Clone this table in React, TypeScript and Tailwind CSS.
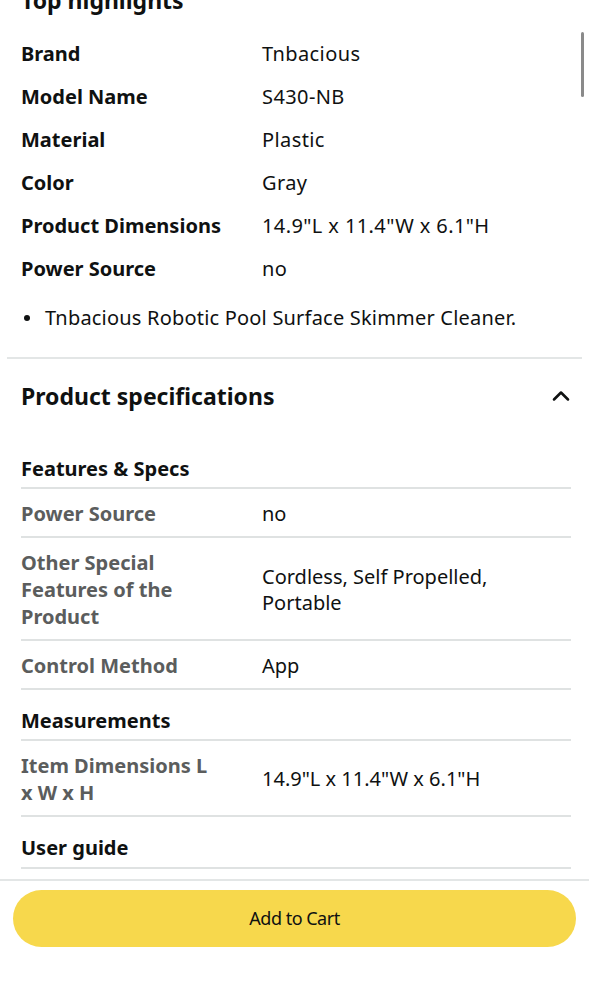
import { ChevronUp } from "lucide-react";

const highlights = [
  ["Brand", "Tnbacious"],
  ["Model Name", "S430-NB"],
  ["Material", "Plastic"],
  ["Color", "Gray"],
  ["Product Dimensions", '14.9"L x 11.4"W x 6.1"H'],
  ["Power Source", "no"],
];

function SpecRow({ label, value }: { label: string; value: string }) {
  return (
    <div className="flex items-center border-b-2 border-[#dfe2e2] pb-[9px] pt-[11px]">
      <div className="w-[241px] shrink-0 pr-[46px] font-bold leading-[27px] text-[#5b5d5d]">{label}</div>
      <div className="leading-[26px] text-[#0f1111]">{value}</div>
    </div>
  );
}

function GroupTitle({ title, last }: { title: string; last?: boolean }) {
  return (
    <div
      className={
        last
          ? "border-b-2 border-[#dfe2e2] pb-[6px] pt-[18px] font-bold leading-[26px] text-[#0f1111]"
          : "border-b-2 border-[#dfe2e2] pb-[5px] pt-[18px] font-bold leading-[26px] text-[#0f1111]"
      }
    >
      {title}
    </div>
  );
}

export default function App() {
  return (
    <div
      className="relative h-[1000px] overflow-hidden bg-white text-[20px] text-[#0f1111]"
      style={{ fontFamily: '"Noto Sans", "Open Sans", sans-serif' }}
    >
      {/* scrollbar */}
      <div className="absolute right-[5px] top-[32px] h-[65px] w-[3px] rounded bg-[#8a8a8a]" />

      <div className="px-[21px]">
        <h2 className="-mt-[14px] text-[23px] font-bold leading-[28px]">Top highlights</h2>
        <div className="mt-[18px]">
          {highlights.map(([label, value]) => (
            <div key={label} className="flex h-[43px] items-center">
              <div className="w-[241px] shrink-0 font-bold">{label}</div>
              <div className="tracking-[0.4px]">{value}</div>
            </div>
          ))}
        </div>
        <ul className="mt-[13px] pl-[3px]">
          <li className="flex items-center gap-[15px] leading-[30px]">
            <span className="inline-block h-[6px] w-[6px] rounded-full bg-[#0f1111]" />
            <span className="tracking-[0.2px]">Tnbacious Robotic Pool Surface Skimmer Cleaner.</span>
          </li>
        </ul>
      </div>

      <div className="mx-[7px] mt-[24px] border-t-2 border-[#e3e6e6]" />

      <div className="px-[21px]">
        <div className="flex items-center justify-between pb-[40px] pt-[19px]">
          <h2 className="text-[23px] font-bold leading-[36px]">Product specifications</h2>
          <ChevronUp className="mr-[-7px] h-[28px] w-[28px]" strokeWidth={2.2} />
        </div>

        <div className="-mt-[16px] mr-[-3px]">
          <GroupTitle title="Features & Specs" />
          <SpecRow label="Power Source" value="no" />
          <SpecRow label="Other Special Features of the Product" value="Cordless, Self Propelled, Portable" />
          <SpecRow label="Control Method" value="App" />
          <GroupTitle title="Measurements" />
          <SpecRow label="Item Dimensions L x W x H" value={'14.9"L x 11.4"W x 6.1"H'} />
          <GroupTitle title="User guide" last />
        </div>
      </div>

      <div className="absolute bottom-0 left-0 right-0 top-[879px] border-t-2 border-[#e3e6e6] bg-white px-[13px] pt-[9px]">
        <button className="flex h-[57px] w-full items-center justify-center rounded-full bg-[#f7d84c] text-[18px] tracking-[-0.5px] text-[#0f1111]">
          Add to Cart
        </button>
      </div>
    </div>
  );
}
